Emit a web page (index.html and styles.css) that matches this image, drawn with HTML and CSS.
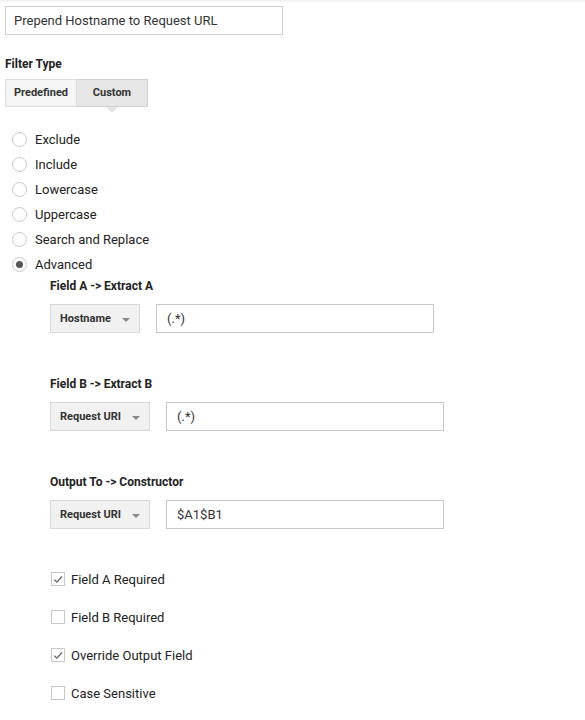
FILE: index.html
```html
<!DOCTYPE html>
<html>
<head>
<meta charset="utf-8">
<link rel="stylesheet" href="styles.css">
</head>
<body>
<div class="topshade"></div>
<div class="page">
  <div class="name-input">Prepend Hostname to Request URL</div>

  <div class="section-label filter-label">Filter Type</div>
  <div class="tabs">
    <div class="tab">Predefined</div>
    <div class="tab tab-active">Custom</div>
  </div>

  <div class="radios">
    <div class="radio-row"><span class="radio"></span><span>Exclude</span></div>
    <div class="radio-row"><span class="radio"></span><span>Include</span></div>
    <div class="radio-row"><span class="radio"></span><span>Lowercase</span></div>
    <div class="radio-row"><span class="radio"></span><span>Uppercase</span></div>
    <div class="radio-row"><span class="radio"></span><span>Search and Replace</span></div>
    <div class="radio-row"><span class="radio radio-on"></span><span>Advanced</span></div>
  </div>

  <div class="advanced">
    <div class="field-group">
      <div class="section-label">Field A -&gt; Extract A</div>
      <div class="field-row">
        <div class="select select-a">Hostname<span class="caret"></span></div>
        <div class="text-input">(.*)</div>
      </div>
    </div>
    <div class="field-group">
      <div class="section-label">Field B -&gt; Extract B</div>
      <div class="field-row">
        <div class="select select-b">Request URI<span class="caret"></span></div>
        <div class="text-input">(.*)</div>
      </div>
    </div>
    <div class="field-group field-group-last">
      <div class="section-label">Output To -&gt; Constructor</div>
      <div class="field-row">
        <div class="select select-b">Request URI<span class="caret"></span></div>
        <div class="text-input">$A1$B1</div>
      </div>
    </div>

    <div class="checks">
      <div class="check-row"><span class="checkbox"><svg viewBox="0 0 13 13" width="13" height="13"><path d="M2.5 6.8 L5.2 9.4 L10.8 3.2" fill="none" stroke="#666" stroke-width="1.4"/></svg></span><span>Field A Required</span></div>
      <div class="check-row"><span class="checkbox"></span><span>Field B Required</span></div>
      <div class="check-row"><span class="checkbox"><svg viewBox="0 0 13 13" width="13" height="13"><path d="M2.5 6.8 L5.2 9.4 L10.8 3.2" fill="none" stroke="#666" stroke-width="1.4"/></svg></span><span>Override Output Field</span></div>
      <div class="check-row"><span class="checkbox"></span><span>Case Sensitive</span></div>
    </div>
  </div>
</div>
</body>
</html>
```
FILE: styles.css
```css
* { box-sizing: border-box; }
html, body { margin: 0; padding: 0; background: #fff; }
body {
  font-family: Roboto, "Liberation Sans", Arial, sans-serif;
  color: #222;
  font-size: 13px;
  position: relative;
}
.topshade {
  position: absolute;
  left: 0; right: 0; top: 0;
  height: 3px;
  background: linear-gradient(#f0f0f0, #fff);
}
.page {
  padding: 5px 5px 10px 5px;
  display: flex;
  flex-direction: column;
  align-items: flex-start;
}
.name-input {
  margin-top: 1px;
  width: 278px;
  height: 29px;
  border: 1px solid #d0d0d0;
  padding-left: 8px;
  line-height: 27px;
  font-size: 13px;
  color: #333;
}
.section-label {
  font-weight: bold;
  font-size: 12px;
  line-height: 16px;
  color: #222;
}
.filter-label { margin-top: 21px; }
.tabs {
  margin-top: 7px;
  display: flex;
}
.tab {
  height: 28px;
  line-height: 26px;
  font-size: 11px;
  font-weight: bold;
  color: #333;
  border: 1px solid #dcdcdc;
  background: #f5f5f5;
  text-align: center;
  width: 72px;
}
.tab-active {
  position: relative;
  width: 71px;
  border-left: none;
  background: #e6e6e6;
  border-color: #d0d0d0;
}
.tab-active::after {
  content: "";
  position: absolute;
  left: 29px;
  bottom: -7px;
  border-left: 6px solid transparent;
  border-right: 6px solid transparent;
  border-top: 6px solid #e6e6e6;
}
.radios {
  margin-top: 20px;
  display: flex;
  flex-direction: column;
}
.radio-row {
  height: 25px;
  display: flex;
  align-items: center;
  gap: 8px;
  padding-left: 7px;
  color: #222;
}
.radio {
  width: 15px;
  height: 15px;
  border: 1px solid #c8c8c8;
  border-radius: 50%;
  display: inline-flex;
  align-items: center;
  justify-content: center;
}
.radio-on::after {
  content: "";
  width: 7px;
  height: 7px;
  border-radius: 50%;
  background: #555;
}
.advanced {
  margin-top: 1px;
  padding-left: 45px;
  display: flex;
  flex-direction: column;
  align-items: flex-start;
}
.field-group {
  display: flex;
  flex-direction: column;
  align-items: flex-start;
  margin-bottom: 43px;
}
.field-group-last { margin-bottom: 0; }
.field-row {
  margin-top: 10px;
  display: flex;
  gap: 16px;
}
.select {
  position: relative;
  height: 29px;
  border: 1px solid #d8d8d8;
  background: #f1f1f1;
  font-size: 11px;
  font-weight: bold;
  color: #333;
  line-height: 27px;
  padding-left: 9px;
}
.select-a { width: 90px; }
.select-b { width: 100px; }
.caret {
  position: absolute;
  right: 9px;
  top: 13px;
  border-left: 4px solid transparent;
  border-right: 4px solid transparent;
  border-top: 4px solid #888;
}
.text-input {
  width: 278px;
  height: 29px;
  border: 1px solid #c8c8c8;
  padding-left: 10px;
  line-height: 27px;
  font-size: 13px;
  color: #333;
}
.checks {
  margin-top: 40px;
  display: flex;
  flex-direction: column;
  gap: 18px;
}
.check-row {
  height: 20px;
  display: flex;
  align-items: center;
  gap: 6px;
  padding-left: 1px;
  color: #222;
}
.checkbox {
  width: 14px;
  height: 14px;
  border: 1px solid #c8c8c8;
  display: inline-flex;
  align-items: center;
  justify-content: center;
}
.checkbox svg { display: block; }
```
